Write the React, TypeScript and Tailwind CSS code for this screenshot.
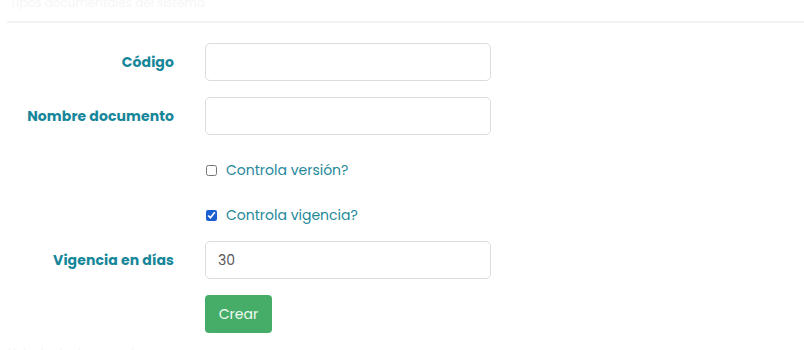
import React, { useState } from "react";

const font = { fontFamily: "Poppins, Inter, 'Open Sans', sans-serif" };

function Field({ label, value }: { label: string; value?: string }) {
  return (
    <div className="flex items-center">
      <label className="w-[175px] pr-px text-right text-[14px] font-bold tracking-[0.1px] text-[#16869a]">
        {label}
      </label>
      <input
        defaultValue={value}
        className="ml-[30px] h-[38px] w-[286px] rounded-[5px] border border-[#dcdcdc] bg-white px-3 text-[14px] text-[#555] outline-none"
      />
    </div>
  );
}

function Check({ label, checked }: { label: string; checked: boolean }) {
  const [on, setOn] = useState(checked);
  return (
    <label className="ml-[206px] flex items-center gap-[9px] text-[14px] text-[#24889a]">
      <input
        type="checkbox"
        checked={on}
        onChange={() => setOn(!on)}
        className="h-[11px] w-[11px] accent-[#1b5fd1]"
      />
      {label}
    </label>
  );
}

export default function App() {
  return (
    <div className="h-[350px] w-[804px] overflow-hidden bg-white" style={font}>
      <div className="h-[21px] overflow-hidden pl-[10px] text-[12px] leading-[6px] text-[#f6f6f6]">
        Tipos documentales del sistema
      </div>
      <div className="ml-[7px] h-[2px] bg-[#f3f3f3]" />

      <div className="flex flex-col pt-[20px]">
        <Field label="Código" />
        <div className="h-[16px]" />
        <Field label="Nombre documento" />
        <div className="h-[25px]" />
        <Check label="Controla versión?" checked={false} />
        <div className="h-[24px]" />
        <Check label="Controla vigencia?" checked={true} />
        <div className="h-[15px]" />
        <Field label="Vigencia en días" value="30" />
        <div className="h-[16px]" />
        <div className="ml-[205px]">
          <button className="h-[38px] w-[67px] rounded-[4px] bg-[#46ad69] text-[14px] text-[#f3fbf4]">
            Crear
          </button>
        </div>
        <div className="mt-[11px] pl-[8px] text-[12px] text-[#f2f8f2]">Listado de documentos</div>
      </div>
    </div>
  );
}
